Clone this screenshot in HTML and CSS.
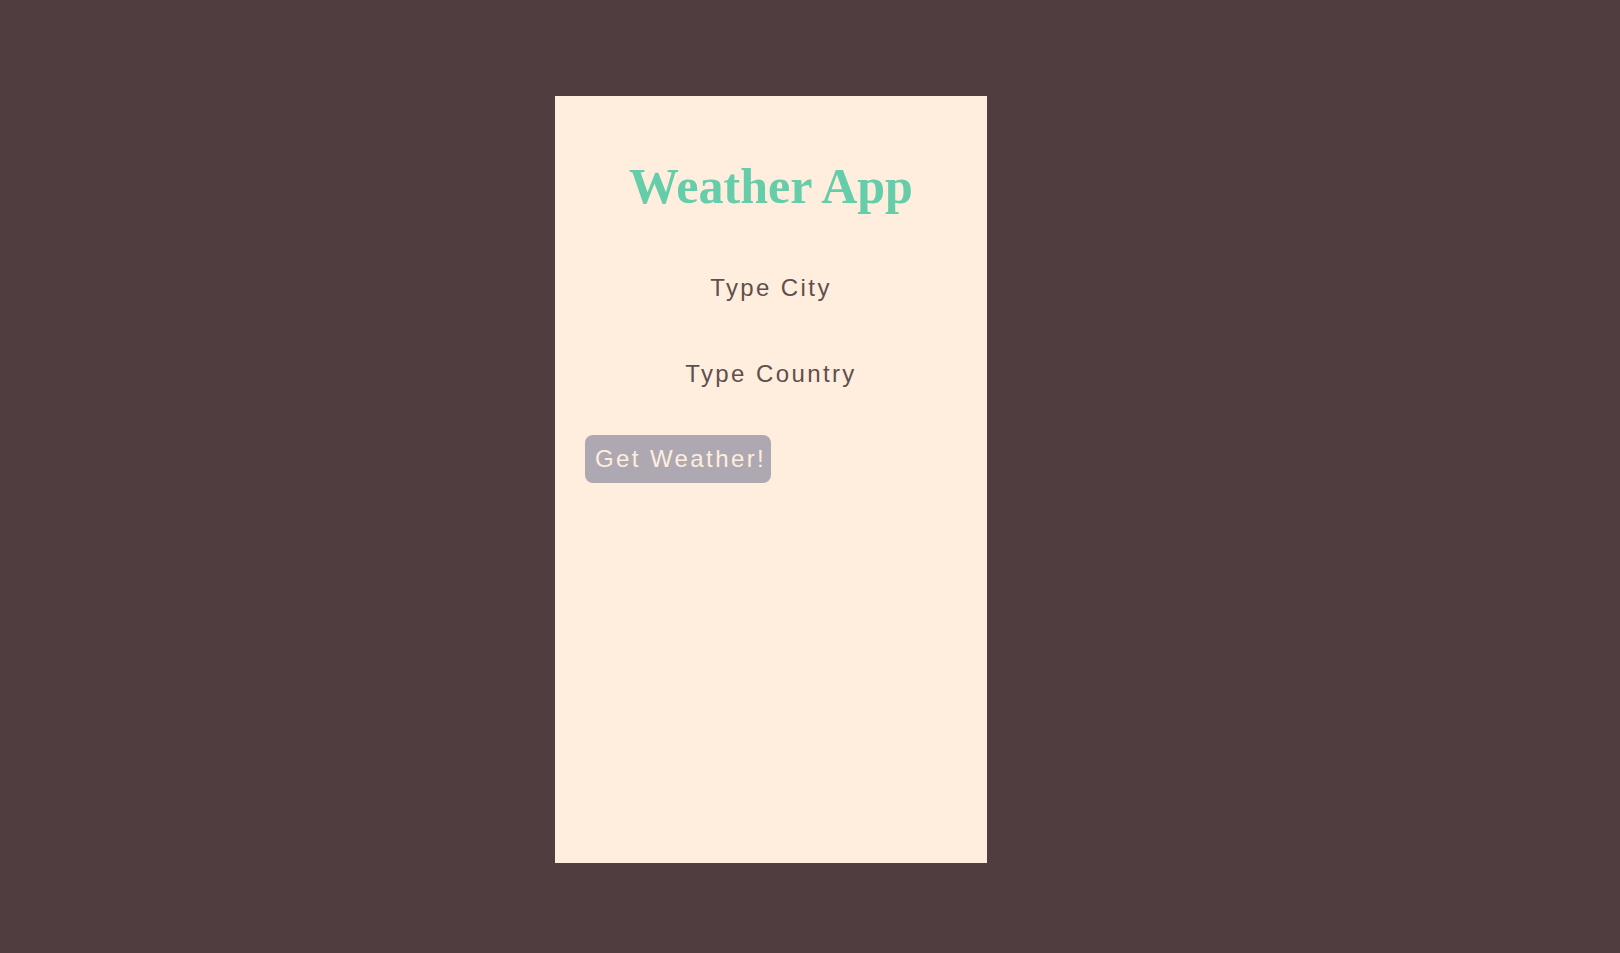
FILE: index.html
```html
<!DOCTYPE html>
<html lang="en">
<head>
<meta charset="utf-8">
<title>Weather App</title>
<link rel="stylesheet" href="styles.css">
</head>
<body>
<main class="page">
  <section class="card">
    <h1 class="title">Weather App</h1>
    <form class="form">
      <input class="field" type="text" placeholder="Type City">
      <input class="field" type="text" placeholder="Type Country">
      <button class="btn" type="button">Get Weather!</button>
    </form>
  </section>
</main>
</body>
</html>
```
FILE: styles.css
```css
html, body {
  margin: 0;
  padding: 0;
  height: 100%;
}
body {
  background: #4f3d40;
  font-family: "Liberation Sans", Arial, sans-serif;
}
.page {
  display: flex;
  justify-content: flex-start;
  padding: 96px 0 0 555px;
}
.card {
  width: 432px;
  height: 767px;
  box-sizing: border-box;
  background: #ffeedd;
  padding: 0 30px;
}
.title {
  margin: 0;
  padding-top: 60px;
  font-family: "Liberation Serif", "Times New Roman", serif;
  font-weight: bold;
  font-size: 50px;
  line-height: 60px;
  color: #66cdaa;
  text-align: center;
}
.form {
  display: flex;
  flex-direction: column;
  align-items: flex-start;
  gap: 46px;
  margin-top: 52px;
}
.field {
  width: 100%;
  box-sizing: border-box;
  height: 40px;
  margin: 0;
  padding: 0;
  border: none;
  outline: none;
  background: transparent;
  font-family: "Liberation Sans", Arial, sans-serif;
  font-size: 24px;
  letter-spacing: 0.1em;
  text-align: center;
  color: #4f3d40;
}
.field::placeholder {
  color: #4f3d40;
  opacity: 0.9;
}
.btn {
  width: 186px;
  height: 48px;
  margin-top: -5px;
  padding: 0 10px;
  border: none;
  border-radius: 8px;
  background: #aea8b3;
  color: #ffeedd;
  font-family: "Liberation Sans", Arial, sans-serif;
  font-size: 24px;
  letter-spacing: 0.1em;
  text-align: left;
  white-space: nowrap;
  overflow: visible;
}
```
